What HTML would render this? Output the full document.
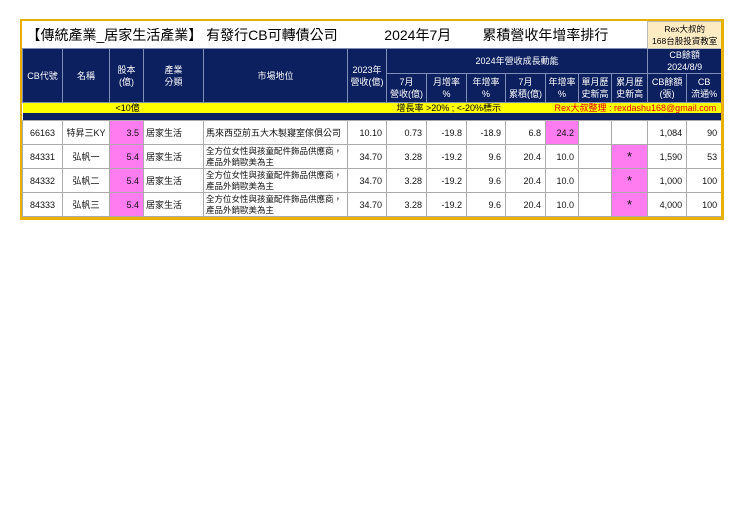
<!DOCTYPE html>
<html><head><meta charset="utf-8"><style>
body{margin:0;background:#fff;width:740px;height:523px;position:relative;font-family:"Liberation Sans","Noto Sans CJK TC",sans-serif;}
.box{position:absolute;left:20px;top:19px;width:699px;height:196px;border:2px solid #e8b000;border-right-width:3px;border-bottom-width:3px;overflow:hidden;}
table{border-collapse:collapse;table-layout:fixed;width:699px;position:absolute;left:0;top:0;}
td{padding:0;overflow:hidden;white-space:nowrap;font-size:9px;}
.t td{height:26px;}
.h td{background:#0c1f5e;color:#fff;text-align:center;border:1px solid #7f8fb8;line-height:12px;}
.y td{background:#ffff00;height:10px;font-size:8.5px;line-height:10px;position:relative;}
.n td{background:#0c1f5e;height:7px;}
.d td{border:1px solid #aaa;height:23px;color:#111;text-align:right;padding-right:4px;font-size:9px;}
.d td.c{text-align:center;padding:0;}
.d td.l{text-align:left;padding-left:2px;}
.m{white-space:normal!important;line-height:11px;font-size:8.5px!important;}
.p{background:#ff7cf0;}
.ys{position:absolute;top:0;white-space:nowrap;font-size:9px;line-height:10px;}
</style></head><body>
<div class="box">
<table>
<colgroup><col style="width:40px"><col style="width:47px"><col style="width:34px"><col style="width:60px"><col style="width:144px"><col style="width:39px"><col style="width:40px"><col style="width:40px"><col style="width:39px"><col style="width:40px"><col style="width:33px"><col style="width:33px"><col style="width:36px"><col style="width:39px"><col style="width:35px"></colgroup>
<tr class="t"><td colspan="13" style="font-size:14px;padding-left:4px;white-space:pre">【傳統產業_居家生活產業】 有發行CB可轉債公司            2024年7月        累積營收年增率排行</td><td colspan="2" style="background:#fdebc4;border:1px solid #bbb;text-align:center;font-size:8.5px;line-height:12px">Rex大叔的<br>168台股投資教室</td></tr>
<tr class="h"><td rowspan="2">CB代號</td><td rowspan="2">名稱</td><td rowspan="2">股本<br>(億)</td><td rowspan="2">產業<br>分類</td><td rowspan="2">市場地位</td><td rowspan="2">2023年<br>營收(億)</td><td colspan="7" style="height:20px">2024年營收成長動能</td><td colspan="2">CB餘額<br>2024/8/9</td></tr>
<tr class="h"><td style="height:28px">7月<br>營收(億)</td><td>月增率<br>%</td><td>年增率<br>%</td><td>7月<br>累積(億)</td><td>年增率<br>%</td><td>單月歷<br>史新高</td><td>累月歷<br>史新高</td><td>CB餘額<br>(張)</td><td>CB<br>流通%</td></tr>
<tr class="y"><td colspan="15"><span class="ys" style="left:93px">&lt;10億</span><span class="ys" style="left:374px">增長率 &gt;20% ; &lt;-20%標示</span><span class="ys" style="left:532px;color:#e00000">Rex大叔整理 : rexdashu168@gmail.com</span></td></tr>
<tr class="n"><td colspan="15"></td></tr>
<tr class="d"><td class="c">66163</td><td class="c">特昇三KY</td><td class="p">3.5</td><td class="l">居家生活</td><td class="l">馬來西亞前五大木製寢室傢俱公司</td><td>10.10</td><td>0.73</td><td>-19.8</td><td>-18.9</td><td>6.8</td><td class="p">24.2</td><td></td><td></td><td>1,084</td><td>90</td></tr>
<tr class="d"><td class="c">84331</td><td class="c">弘帆一</td><td class="p">5.4</td><td class="l">居家生活</td><td class="l m">全方位女性與孩童配件飾品供應商，產品外銷歐美為主</td><td>34.70</td><td>3.28</td><td>-19.2</td><td>9.6</td><td>20.4</td><td>10.0</td><td></td><td class="c p" style="font-size:13px">*</td><td>1,590</td><td>53</td></tr>
<tr class="d"><td class="c">84332</td><td class="c">弘帆二</td><td class="p">5.4</td><td class="l">居家生活</td><td class="l m">全方位女性與孩童配件飾品供應商，產品外銷歐美為主</td><td>34.70</td><td>3.28</td><td>-19.2</td><td>9.6</td><td>20.4</td><td>10.0</td><td></td><td class="c p" style="font-size:13px">*</td><td>1,000</td><td>100</td></tr>
<tr class="d"><td class="c">84333</td><td class="c">弘帆三</td><td class="p">5.4</td><td class="l">居家生活</td><td class="l m">全方位女性與孩童配件飾品供應商，產品外銷歐美為主</td><td>34.70</td><td>3.28</td><td>-19.2</td><td>9.6</td><td>20.4</td><td>10.0</td><td></td><td class="c p" style="font-size:13px">*</td><td>4,000</td><td>100</td></tr>
</table>
</div>
</body></html>
